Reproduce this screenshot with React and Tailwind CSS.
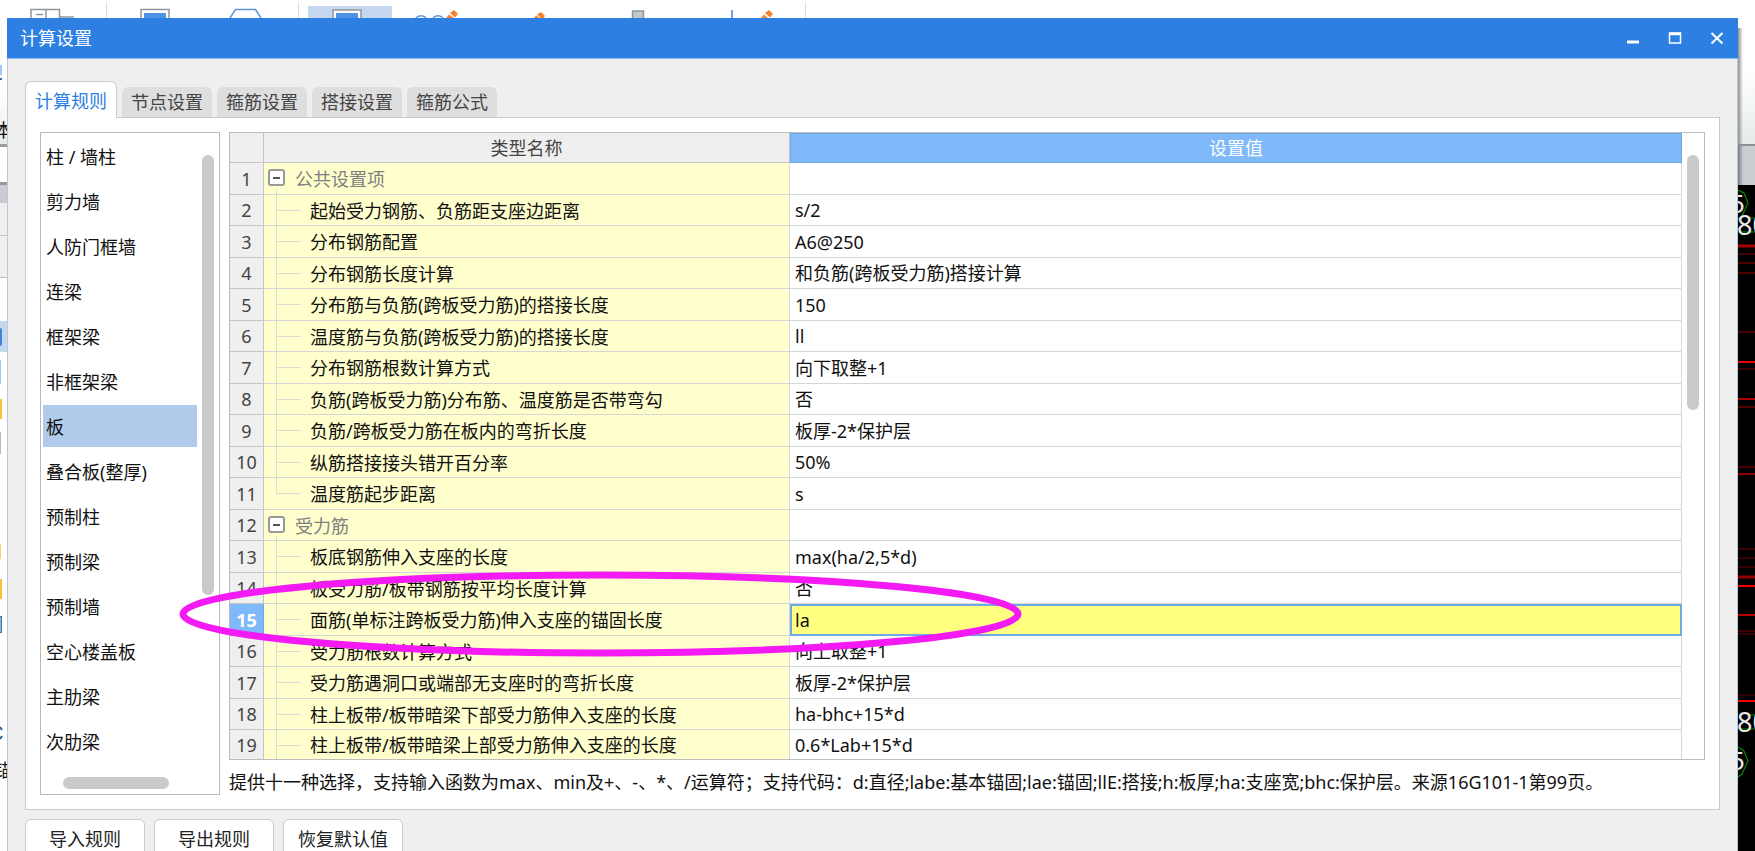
import React from "react";

const TABS = ["计算规则", "节点设置", "箍筋设置", "搭接设置", "箍筋公式"];

const MEMBERS = [
  "柱 / 墙柱", "剪力墙", "人防门框墙", "连梁", "框架梁", "非框架梁", "板",
  "叠合板(整厚)", "预制柱", "预制梁", "预制墙", "空心楼盖板", "主肋梁", "次肋梁",
];

const ROWS = [
  { group: true, name: "公共设置项", value: "" },
  { name: "起始受力钢筋、负筋距支座边距离", value: "s/2" },
  { name: "分布钢筋配置", value: "A6@250" },
  { name: "分布钢筋长度计算", value: "和负筋(跨板受力筋)搭接计算" },
  { name: "分布筋与负筋(跨板受力筋)的搭接长度", value: "150" },
  { name: "温度筋与负筋(跨板受力筋)的搭接长度", value: "ll" },
  { name: "分布钢筋根数计算方式", value: "向下取整+1" },
  { name: "负筋(跨板受力筋)分布筋、温度筋是否带弯勾", value: "否" },
  { name: "负筋/跨板受力筋在板内的弯折长度", value: "板厚-2*保护层" },
  { name: "纵筋搭接接头错开百分率", value: "50%" },
  { name: "温度筋起步距离", value: "s", last: true },
  { group: true, name: "受力筋", value: "" },
  { name: "板底钢筋伸入支座的长度", value: "max(ha/2,5*d)" },
  { name: "板受力筋/板带钢筋按平均长度计算", value: "否" },
  { name: "面筋(单标注跨板受力筋)伸入支座的锚固长度", value: "la", active: true },
  { name: "受力筋根数计算方式", value: "向上取整+1" },
  { name: "受力筋遇洞口或端部无支座时的弯折长度", value: "板厚-2*保护层" },
  { name: "柱上板带/板带暗梁下部受力筋伸入支座的长度", value: "ha-bhc+15*d" },
  { name: "柱上板带/板带暗梁上部受力筋伸入支座的长度", value: "0.6*Lab+15*d" },
];

const rowHeight = (i) =>
  i === ROWS.length - 1 ? "h-[29px]" : i % 2 === 0 ? "h-[32px]" : "h-[31px]";

function ToolbarStrip() {
  return (
    <svg className="block h-[18px] w-[900px] shrink-0" viewBox="0 0 900 18" fill="none" aria-hidden="true">
      <path d="M106.500 2V18M298.500 2V18M805.500 2V18" stroke="#e0e0e0" />
      <path d="M31 18V9.500H59.500V18M46 10V18M36 14.500H43M60 17H74" stroke="#8f969b" strokeWidth="1.500" />
      <path d="M141 18V9.500H169V18" stroke="#8f969b" strokeWidth="1.500" />
      <rect x="144" y="13" width="22" height="5" fill="#4f93e6" />
      <path d="M230 18L235.500 9.500H255.500L261 18" stroke="#5a95dd" strokeWidth="1.500" />
      <rect x="308" y="6" width="84" height="12" fill="#c6d8f0" />
      <rect x="333" y="10" width="28" height="10" fill="#fff" stroke="#8f969b" strokeWidth="1.500" />
      <rect x="336" y="13" width="22" height="5" fill="#4f93e6" />
      <path d="M416 18C418 15 424 15 426 18M433 18C435 15 441 15 443 18" stroke="#5a95dd" strokeWidth="1.500" />
      <path d="M446 18L449 14.500L454 18ZM450 13L454 10L458 14L455 17.500Z" fill="#f5822b" />
      <path d="M534 18L536 15.500L540 18ZM537 14.500L541 12L545 16L543.500 18H541Z" fill="#f5822b" />
      <rect x="632.500" y="11" width="11" height="10" fill="#c0c7ca" stroke="#8f969b" strokeWidth="1.500" />
      <path d="M732 10V18" stroke="#3f85d8" strokeWidth="1.500" />
      <path d="M761 18L764 14.500L768 18ZM765 13L769 10L773 14L770 17.500Z" fill="#f5822b" />
    </svg>
  );
}

function LeftStrip() {
  return (
    <div className="flex w-[7px] shrink-0 flex-col overflow-hidden bg-white" aria-hidden="true">
      <div className="flex h-[126px] shrink-0 flex-col bg-linear-to-b from-white from-60% to-[#e6ebec]">
        <div className="mt-[47px] h-[10px] w-[2px] bg-[#9cc8f5]" />
        <div className="mt-[3px] h-[2px] w-[2px] bg-[#3a6ea8]" />
        <div className="mt-[38px] flex h-[24px] justify-center text-[18px] leading-[24px] whitespace-nowrap">本</div>
      </div>
      <div className="h-[3px] shrink-0 bg-[#9b9da0]" />
      <div className="mt-[2px] h-[33px] shrink-0 bg-white" />
      <div className="h-[3px] shrink-0 bg-[#96989c]" />
      <div className="h-[18px] shrink-0 bg-[#cbccd2]" />
      <div className="h-[33px] shrink-0 border-b border-[#c4c4c8] bg-[#efefef]" />
      <div className="h-[42px] shrink-0 border-b border-[#b8bec8] bg-[#efefef]" />
      <div className="mt-[43px] flex h-[31px] shrink-0 items-center bg-[#c6d8f0]">
        <div className="h-[18px] w-[2px] rounded-r bg-[#3f85d8]" />
      </div>
      <div className="mt-[8px] h-[24px] w-px shrink-0 bg-[#9cc8f5]" />
      <div className="mt-[15px] h-[20px] w-[2px] shrink-0 bg-[#fbbf3c]" />
      <div className="mt-[13px] h-[22px] w-px shrink-0 bg-[#b8bcc0]" />
      <div className="mt-[90px] h-[15px] w-px shrink-0 bg-[#fcd37a]" />
      <div className="mt-[20px] h-[20px] w-[2px] shrink-0 bg-[#fbbf3c]" />
      <div className="mt-[17px] h-[17px] w-[2px] shrink-0 border border-l-0 border-[#4a7296] bg-[#7db8ee]" />
      <svg className="mt-[92px] h-[18px] w-[7px] shrink-0" viewBox="0 0 7 18" fill="none">
        <path d="M0 2L2 5M2 11L0 14" stroke="#2e5f98" strokeWidth="2" />
      </svg>
      <div className="mt-[15px] flex h-[24px] shrink-0 justify-center text-[18px] leading-[24px] whitespace-nowrap">锚</div>
    </div>
  );
}

const RED_LINES = [
  [246, 3, "#a80000"], [254, 1, "#800000"], [263, 1, "#980000"], [273, 1, "#980000"],
  [332, 1, "#900000"], [362, 2, "#f00000"], [369, 1, "#780000"], [399, 2, "#b00000"],
  [407, 2, "#500000"], [467, 2, "#480000"], [474, 2, "#900000"], [549, 1, "#780000"],
  [558, 1, "#680000"], [567, 1, "#680000"], [577, 3, "#900000"], [586, 2, "#f80000"],
  [615, 2, "#b80000"], [631, 1, "#780000"], [634, 1, "#680000"], [695, 1, "#580000"],
  [701, 2, "#f00000"],
];

function RightStrip() {
  return (
    <div className="flex w-[17px] shrink-0 flex-col overflow-hidden" aria-hidden="true">
      <div className="flex h-[126px] shrink-0 bg-linear-to-b from-white from-40% to-[#e6ebec]">
        <div className="mt-[10px] w-[5px] bg-linear-to-r from-[#8d8f91] to-transparent" />
      </div>
      <div className="h-[2px] shrink-0 bg-[#8d9093]" />
      <div className="flex h-[39px] shrink-0 bg-[#c9cdd2]">
        <div className="w-[5px] bg-linear-to-r from-[#777a7e] to-transparent" />
      </div>
      <svg className="block h-[666px] w-[17px] shrink-0 bg-black" viewBox="1738 185 17 666">
        <path d="M1738 190L1744 193L1748 203L1742 216L1738 219M1740 232H1755M1750 218H1755" fill="none" stroke="#008a00" strokeWidth="1.200" />
        <path d="M1738 747L1744 751L1748 761L1742 774L1738 777M1740 729H1755M1750 715H1755" fill="none" stroke="#008a00" strokeWidth="1.200" />
        {RED_LINES.map(([y, h, c]) => (
          <rect key={y} x="1738" y={y - h / 2} width="17" height={h} fill={c} />
        ))}
        <g fill="#e8e8e8" fontFamily="'Noto Sans', sans-serif" fontSize="27">
          <text x="1730" y="213" fontSize="26">5</text>
          <text x="1737" y="235">80</text>
          <text x="1737" y="732">80</text>
          <text x="1730" y="770" fontSize="26">5</text>
        </g>
      </svg>
    </div>
  );
}

function TitleBar() {
  return (
    <header className="flex h-[41px] shrink-0 items-center justify-between border-b border-[#8ab8f0] bg-[#2d80e2] pr-[14px] pl-[13px]">
      <h1 className="text-[18px] leading-6 text-white">计算设置</h1>
      <div className="flex gap-[28px]">
        <button type="button" aria-label="最小化" className="h-[14px] w-[14px]">
          <svg viewBox="0 0 14 14" className="block h-[14px] w-[14px]"><path d="M1 11H13" stroke="#fff" strokeWidth="3" /></svg>
        </button>
        <button type="button" aria-label="最大化" className="h-[14px] w-[14px]">
          <svg viewBox="0 0 14 14" className="block h-[14px] w-[14px]" fill="none" stroke="#fff"><rect x="1.500" y="2" width="11" height="10" strokeWidth="1.500" /><path d="M1 3H13" strokeWidth="2.500" /></svg>
        </button>
        <button type="button" aria-label="关闭" className="h-[14px] w-[14px]">
          <svg viewBox="0 0 14 14" className="block h-[14px] w-[14px]" fill="none" stroke="#fff" strokeWidth="2"><path d="M1.500 2L12.500 12.500M12.500 2L1.500 12.500" /></svg>
        </button>
      </div>
    </header>
  );
}

function Tabs() {
  return (
    <div role="tablist" className="z-10 -mb-px flex items-end gap-[5px]">
      {TABS.map((t, i) =>
        i === 0 ? (
          <button key={t} type="button" role="tab" aria-selected="true" className="h-[37px] w-[92px] rounded-t-md border border-b-0 border-[#c8cacd] bg-white pt-[2px] text-[18px] leading-6 text-[#2d80e2]">{t}</button>
        ) : (
          <button key={t} type="button" role="tab" aria-selected="false" className="mb-px h-[30px] w-[90px] rounded-t-md bg-[#dedede] text-[18px] leading-6 text-[#444]">{t}</button>
        )
      )}
    </div>
  );
}

function MemberList() {
  return (
    <nav aria-label="构件类型" className="flex w-[180px] shrink-0 flex-col border border-[#b9b9b9] bg-white">
      <div className="flex grow">
        <ul className="flex w-[156px] flex-col gap-[3px] pt-[2px] pl-[2px]">
          {MEMBERS.map((m) => (
            <li key={m}>
              <button type="button" className={"flex h-[42px] w-full items-center pt-[2px] pl-[3px] text-left text-[18px] leading-6 whitespace-nowrap text-[#111] " + (m === "板" ? "bg-[#b1cbec]" : "")}>{m}</button>
            </li>
          ))}
        </ul>
        <div className="mt-[22px] ml-[5px] h-[440px] w-[12px] rounded-full bg-[#cacaca]" />
      </div>
      <div className="mb-[5px] ml-[22px] h-[12px] w-[106px] rounded-full bg-[#cacaca]" />
    </nav>
  );
}

function NameCell({ row }) {
  if (row.group) {
    return (
      <div className="flex h-full items-start text-[#808080]">
        <div className="flex w-[31px] flex-col self-stretch pt-[6px] pl-[4px]">
          <button type="button" aria-label="折叠" className="flex h-[17px] w-[17px] shrink-0 items-center justify-center rounded-[3px] border-2 border-[#999] bg-white">
            <span className="h-[2px] w-[7px] bg-[#555]" />
          </button>
          <span className="mt-[3px] ml-[8px] w-px grow bg-[#dcdcdc]" />
        </div>
        <span className="pt-[4px] leading-6">{row.name}</span>
      </div>
    );
  }
  return (
    <div className="flex h-full items-center text-[#111]">
      <div className="flex w-[46px] flex-col self-stretch pl-[12px]">
        <div className="h-[16px] w-[25px] border-b border-l border-[#dcdcdc]" />
        {!row.last && <div className="w-[25px] grow border-l border-[#dcdcdc]" />}
      </div>
      <span className="pt-[1px] leading-6">{row.name}</span>
    </div>
  );
}

function RulesTable() {
  return (
    <div className="border border-[#bdbdbd] bg-white pr-[22px]">
      <div className="flex">
        <table className="w-full table-fixed border-separate border-spacing-0 text-[18px] whitespace-nowrap">
          <colgroup>
            <col className="w-[34px]" />
            <col className="w-[526px]" />
            <col />
          </colgroup>
          <thead>
            <tr className="h-[30px]">
              <th className="border-r border-b border-[#c4c4c4] bg-[#efefef] p-0" aria-label="序号" />
              <th scope="col" className="border-r border-b border-[#c4c4c4] bg-[#efefef] p-0 font-normal leading-6 text-[#444]">类型名称</th>
              <th scope="col" className="border border-[#6fa9e8] bg-[#7fb9f9] p-0 font-normal leading-6 text-white">设置值</th>
            </tr>
          </thead>
          <tbody>
            {ROWS.map((row, i) => {
              const h = rowHeight(i);
              const line = i === ROWS.length - 1 ? "" : "border-b";
              return (
                <tr key={i} className={h}>
                  <th scope="row" className={`border-r p-0 text-center leading-6 ${line} ${row.active ? "border-[#6fa9e8] bg-[#7fb9f9] font-bold text-white" : "border-[#c4c4c4] bg-[#efefef] font-normal text-[#444]"}`}>{i + 1}</th>
                  <td className={`${h} border-r border-[#d6d6d6] bg-[#ffffcd] p-0 ${line}`}><NameCell row={row} /></td>
                  {row.active ? (
                    <td className="border-2 border-[#6fa9e8] bg-[#ffff80] p-0">
                      <input aria-label={row.name} defaultValue={row.value} className="block h-[26px] w-full bg-transparent pl-[3px] leading-6 text-[#111] outline-none" />
                    </td>
                  ) : (
                    <td className={`border-r border-[#d6d6d6] bg-white p-0 pl-[5px] leading-6 text-[#111] ${line}`}>{row.value}</td>
                  )}
                </tr>
              );
            })}
          </tbody>
        </table>
        <div className="-mr-[22px] flex w-[22px] shrink-0 justify-center pt-[22px]">
          <div className="h-[255px] w-[12px] rounded-full bg-[#cacaca]" />
        </div>
      </div>
    </div>
  );
}

export default function App() {
  return (
    <div className="relative flex h-screen flex-col overflow-hidden bg-white font-['Noto_Sans','Noto_Sans_CJK_SC',sans-serif] text-[#111]">
      <ToolbarStrip />
      <div className="flex grow items-start">
        <LeftStrip />
        <main className="flex min-w-0 grow flex-col bg-[#efefef]">
          <TitleBar />
          <div className="flex flex-col border-x border-[#bcc8d8] px-[17px] pt-[22px] pb-4">
            <Tabs />
            <section className="flex gap-[9px] border border-[#c8cacd] bg-white px-[14px] py-[14px]">
              <MemberList />
              <div className="flex min-w-0 grow flex-col">
                <RulesTable />
                <p className="pt-[10px] pb-px text-[18px] leading-6 whitespace-nowrap">
                  提供十一种选择，支持输入函数为max、min及+、-、*、/运算符；支持代码：d:直径;labe:基本锚固;lae:锚固;llE:搭接;h:板厚;ha:支座宽;bhc:保护层。来源16G101-1第99页。
                </p>
              </div>
            </section>
            <div className="mt-[9px] flex gap-[9px]">
              {["导入规则", "导出规则", "恢复默认值"].map((b) => (
                <button key={b} type="button" className="h-[40px] w-[120px] rounded-md border border-[#c8cacd] bg-white text-[18px] leading-6 text-[#222]">{b}</button>
              ))}
            </div>
          </div>
        </main>
        <RightStrip />
      </div>
      <svg className="pointer-events-none absolute top-[570px] left-[179px] h-[88px] w-[844px]" viewBox="0 0 844 88" fill="none" aria-hidden="true">
        <ellipse cx="421.500" cy="44" rx="417.500" ry="39" stroke="#f31af3" strokeWidth="7" />
      </svg>
    </div>
  );
}
